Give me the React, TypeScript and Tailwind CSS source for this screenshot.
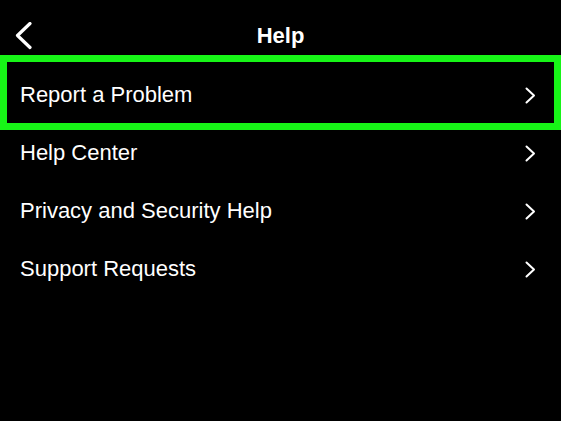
import React from "react";

const Chevron = () => (
  <svg width="11" height="17" viewBox="0 0 11 17" fill="none">
    <path d="M1.5 1.5 L9 8.5 L1.5 15.5" stroke="white" strokeWidth="2" strokeLinecap="round" strokeLinejoin="round" />
  </svg>
);

const items = ["Report a Problem", "Help Center", "Privacy and Security Help", "Support Requests"];

export default function App() {
  return (
    <div className="w-[561px] h-[421px] bg-black text-white overflow-hidden" style={{ fontFamily: '"Liberation Sans", Arial, sans-serif' }}>
      <div className="relative h-[66px] pt-[6px] flex items-center justify-center">
        <div className="absolute left-[15px] top-[22px]">
          <svg width="18" height="28" viewBox="0 0 18 28" fill="none">
            <path d="M15 1.5 L2.5 13.5 L15 25.5" stroke="white" strokeWidth="3.2" strokeLinecap="round" strokeLinejoin="round" />
          </svg>
        </div>
        <span className="text-[22px] font-bold leading-none">Help</span>
      </div>
      <div className="flex flex-col">
        {items.map((t, i) => (
          <div key={t} className="relative h-[58px] flex items-center justify-between pl-[20px] pr-[25px]">
            {i === 0 && (
              <div className="absolute left-0 right-0 top-[-11px] bottom-[-6px] border-[7px] border-[#17f517]" />
            )}
            <span className="text-[22px] leading-none">{t}</span>
            <Chevron />
          </div>
        ))}
      </div>
    </div>
  );
}
